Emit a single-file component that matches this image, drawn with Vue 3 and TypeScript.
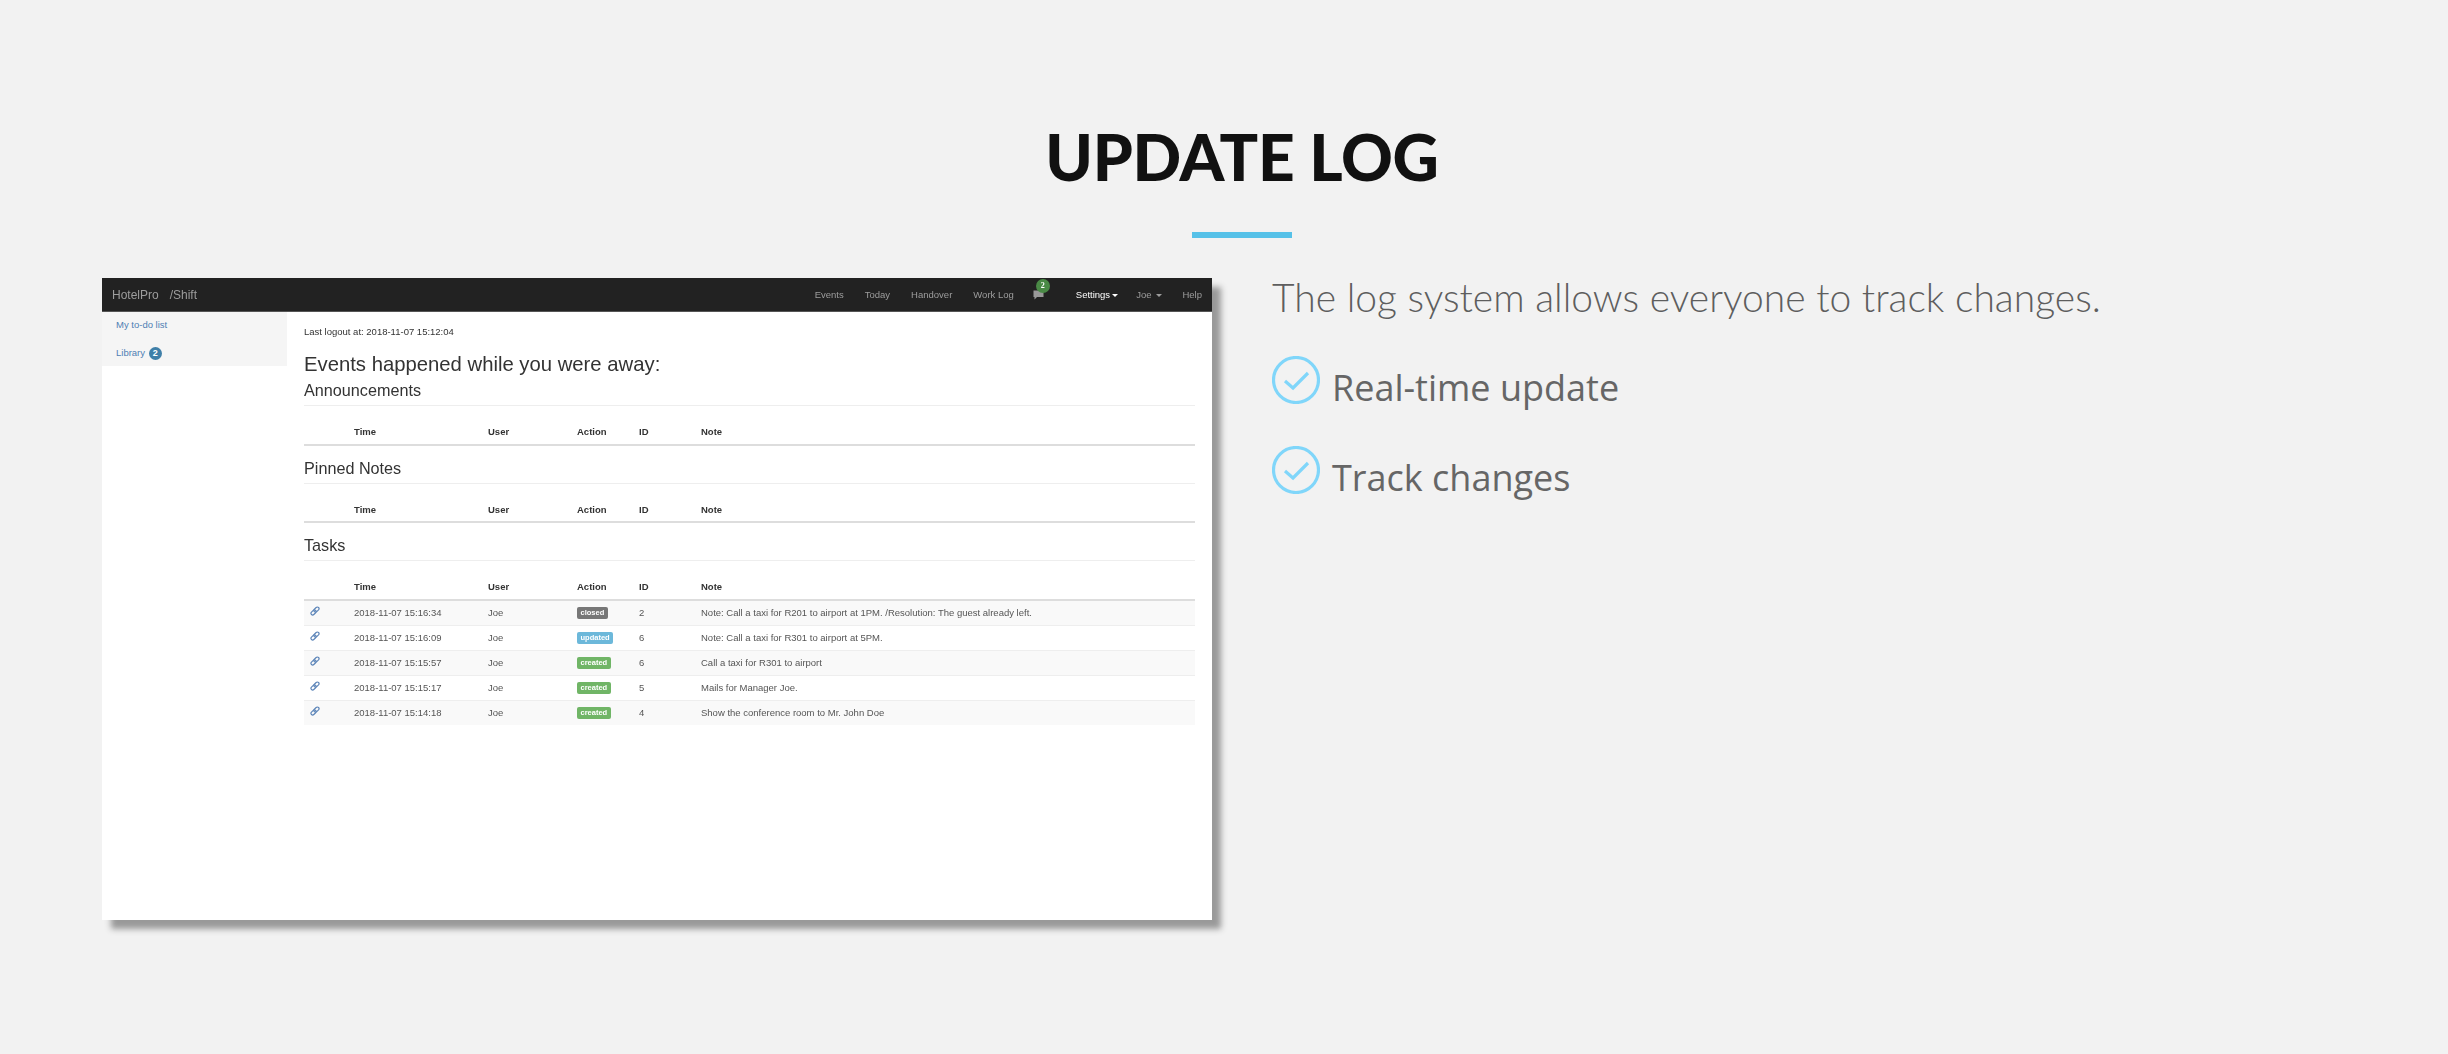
<script setup lang="ts">
interface LogRow {
  time: string;
  action: 'closed' | 'updated' | 'created';
  id: number;
  note: string;
}

const navLinks = ['Events', 'Today', 'Handover', 'Work Log'];

const rows: LogRow[] = [
  { time: '2018-11-07 15:16:34', action: 'closed', id: 2, note: 'Note: Call a taxi for R201 to airport at 1PM. /Resolution: The guest already left.' },
  { time: '2018-11-07 15:16:09', action: 'updated', id: 6, note: 'Note: Call a taxi for R301 to airport at 5PM.' },
  { time: '2018-11-07 15:15:57', action: 'created', id: 6, note: 'Call a taxi for R301 to airport' },
  { time: '2018-11-07 15:15:17', action: 'created', id: 5, note: 'Mails for Manager Joe.' },
  { time: '2018-11-07 15:14:18', action: 'created', id: 4, note: 'Show the conference room to Mr. John Doe' }
];

const sections = [
  { title: 'Announcements', rows: [] as LogRow[] },
  { title: 'Pinned Notes', rows: [] as LogRow[] },
  { title: 'Tasks', rows }
];

const features = ['Real-time update', 'Track changes'];
</script>

<template>
  <div class="page">
    <header class="heading">
      <h1>UPDATE LOG</h1>
      <div class="rule"></div>
    </header>

    <div class="columns">
      <div class="shot">
        <nav class="navbar">
          <div class="brand"><span>HotelPro</span><span>/Shift</span></div>
          <div class="nav-right">
            <a v-for="link in navLinks" :key="link">{{ link }}</a>
            <span class="bubble">
              <svg width="11" height="10" viewBox="0 0 11 10">
                <path d="M0.5 0.5h10v6.5H4L1.5 9.5V7H0.5z" fill="#999" />
              </svg>
              <b class="bubble-count">2</b>
            </span>
            <a class="active">Settings<i class="caret"></i></a>
            <a class="tight">Joe<i class="caret spaced"></i></a>
            <a class="tight-help">Help</a>
          </div>
        </nav>

        <div class="shot-body">
          <aside class="sidebar">
            <a>My to-do list</a>
            <a>Library <span class="side-badge">2</span></a>
          </aside>

          <main class="content">
            <p class="logout">Last logout at: 2018-11-07 15:12:04</p>
            <h3>Events happened while you were away:</h3>

            <section v-for="section in sections" :key="section.title" class="log-section">
              <h4>{{ section.title }}</h4>
              <table>
                <colgroup>
                  <col class="c-link" />
                  <col class="c-time" />
                  <col class="c-user" />
                  <col class="c-action" />
                  <col class="c-id" />
                  <col />
                </colgroup>
                <thead>
                  <tr>
                    <th></th>
                    <th>Time</th>
                    <th>User</th>
                    <th>Action</th>
                    <th>ID</th>
                    <th>Note</th>
                  </tr>
                </thead>
                <tbody>
                  <tr v-for="row in section.rows" :key="row.time">
                    <td>
                      <svg class="link-icon" width="10" height="10" viewBox="0 0 24 24" fill="none" stroke="#5b84b8" stroke-width="2.8">
                        <rect x="11.5" y="1.5" width="8" height="14" rx="4" transform="rotate(45 15.5 8.5)" />
                        <rect x="4.5" y="8.5" width="8" height="14" rx="4" transform="rotate(45 8.5 15.5)" />
                      </svg>
                    </td>
                    <td>{{ row.time }}</td>
                    <td>Joe</td>
                    <td><span class="label" :class="row.action">{{ row.action }}</span></td>
                    <td>{{ row.id }}</td>
                    <td>{{ row.note }}</td>
                  </tr>
                </tbody>
              </table>
            </section>
          </main>
        </div>
      </div>

      <div class="copy">
        <p class="lead">The log system allows everyone to track changes.</p>
        <ul>
          <li v-for="item in features" :key="item">
            <svg width="48" height="48" viewBox="0 0 48 48" fill="none" stroke="#80d6fa">
              <circle cx="24" cy="24" r="22.5" stroke-width="3.2" />
              <path d="M13 25l8 7L36 17" stroke-width="3.2" />
            </svg>
            <span>{{ item }}</span>
          </li>
        </ul>
      </div>
    </div>
  </div>
</template>

<style>
html,
body {
  margin: 0;
  background: #f2f2f2;
}
</style>

<style scoped>
.page {
  height: 1054px;
  box-sizing: border-box;
  overflow: hidden;
  background: #f2f2f2;
  padding-top: 122px;
}

.heading {
  padding-left: 36px;
  text-align: center;
}

h1 {
  margin: 0;
  font-family: Lato, sans-serif;
  font-weight: 900;
  font-size: 64px;
  letter-spacing: -0.3px;
  line-height: 70px;
  color: #111;
}

.rule {
  width: 100px;
  height: 6px;
  margin: 40px auto 0;
  background: #56c1e8;
}

.columns {
  display: flex;
  align-items: flex-start;
  gap: 60px;
  margin-top: 40px;
  padding-left: 102px;
}

.shot {
  width: 1110px;
  height: 642px;
  flex: none;
  background: #fff;
  box-shadow: 9px 9px 6px #999;
  font-family: "Liberation Sans", Arial, sans-serif;
  color: #333;
}

.navbar {
  height: 33px;
  display: flex;
  align-items: center;
  justify-content: space-between;
  padding: 0 10px;
  background: #222;
  border-bottom: 1px solid #555;
  color: #9d9d9d;
  filter: blur(0.3px);
}

.brand {
  display: flex;
  gap: 11px;
  font-size: 12px;
}

.nav-right {
  display: flex;
  align-items: center;
  font-size: 9.5px;
}

.nav-right a {
  margin-left: 21px;
}

.nav-right a.tight {
  margin-left: 18px;
}

.nav-right a.tight-help {
  margin-left: 20px;
}

.nav-right .active {
  color: #fff;
}

.caret {
  display: inline-block;
  margin-left: 2px;
  vertical-align: middle;
  border-top: 3px solid currentColor;
  border-left: 3px solid transparent;
  border-right: 3px solid transparent;
}

.caret.spaced {
  margin-left: 5px;
}

.bubble {
  position: relative;
  display: flex;
  margin: 0 11px 0 19px;
}

.bubble-count {
  position: absolute;
  top: -11px;
  left: 3px;
  width: 14px;
  height: 14px;
  border-radius: 50%;
  background: #4a8a46;
  color: #fff;
  font: 700 8px/14px "Liberation Serif", serif;
  text-align: center;
}

.shot-body {
  display: flex;
  filter: blur(0.3px);
}

.sidebar {
  width: 185px;
  height: 54px;
  flex: none;
  box-sizing: border-box;
  padding: 1px 14px 0;
  background: #f5f5f5;
  font-size: 9.5px;
  color: #4f80b4;
}

.sidebar a {
  display: block;
  height: 28px;
  line-height: 24px;
}

.side-badge {
  display: inline-block;
  width: 13px;
  height: 13px;
  margin-left: 1px;
  border-radius: 50%;
  background: #3f7fa8;
  color: #fff;
  font-size: 9px;
  font-weight: 700;
  line-height: 13px;
  text-align: center;
}

.content {
  flex: 1;
  min-width: 0;
  padding: 14px 17px 0;
}

.logout {
  margin: 0;
  font-size: 9.5px;
  line-height: 12px;
}

h3 {
  margin: 13px 0 3px;
  font-size: 20.3px;
  font-weight: 400;
  line-height: 26px;
}

h4 {
  margin: 0;
  padding-bottom: 5px;
  border-bottom: 1px solid #eee;
  font-size: 16.2px;
  font-weight: 400;
  line-height: 20px;
}

.log-section {
  padding-bottom: 12px;
}

table {
  width: 100%;
  table-layout: fixed;
  border-collapse: collapse;
  margin-top: 13.5px;
  font-size: 9.5px;
}

.c-link {
  width: 46px;
}

.c-time {
  width: 134px;
}

.c-user {
  width: 89px;
}

.c-action {
  width: 62px;
}

.c-id {
  width: 62px;
}

th {
  height: 24px;
  padding: 0 4px;
  border-bottom: 2px solid #ddd;
  text-align: left;
  font-weight: 700;
}

td {
  height: 24px;
  padding: 0 4px;
  border-bottom: 1px solid #eee;
  color: #555;
}

tbody tr:nth-child(odd) {
  background: #f9f9f9;
}

tbody tr:last-child td {
  border-bottom: 0;
}

.link-icon {
  display: block;
  margin: -3px 0 0 2px;
}

.label {
  display: inline-block;
  padding: 0 3.5px;
  border-radius: 2px;
  color: #fff;
  font-size: 7.5px;
  font-weight: 700;
  line-height: 12px;
}

.closed {
  background: #777;
}

.updated {
  background: #6cb8da;
}

.created {
  background: #70b566;
}

.copy {
  width: 900px;
  margin-top: -6px;
  color: #666;
}

.lead {
  margin: 0;
  font-family: Lato, sans-serif;
  font-weight: 300;
  font-size: 39px;
  line-height: 50px;
  color: #5e5e5e;
}

ul {
  list-style: none;
  margin: 34px 0 0;
  padding: 0;
}

li {
  display: flex;
  gap: 12px;
  height: 90px;
  font-family: "Open Sans", sans-serif;
  font-size: 36px;
  line-height: 64px;
}
</style>
